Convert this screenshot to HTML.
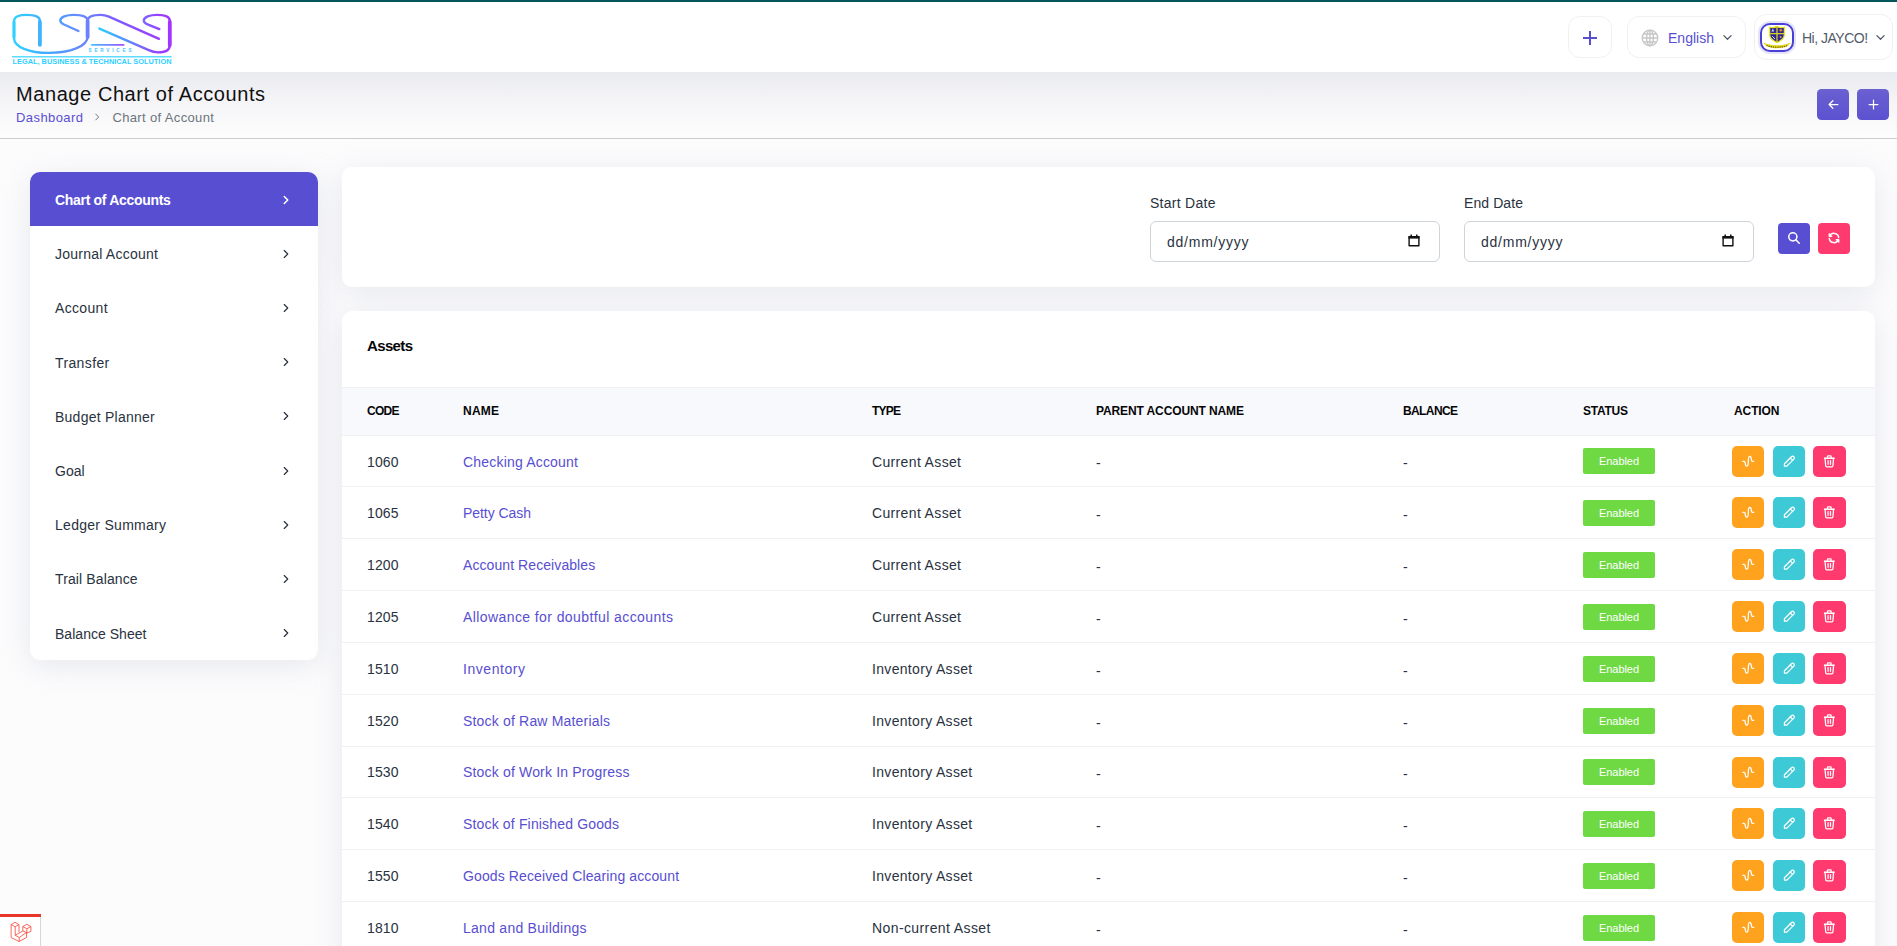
<!DOCTYPE html>
<html lang="en"><head><meta charset="utf-8"><title>Manage Chart of Accounts</title>
<style>
*{box-sizing:border-box}
html,body{margin:0;padding:0}
body{width:1897px;height:946px;overflow:hidden;position:relative;background:#fcfcfd;font-family:"Liberation Sans",sans-serif;font-size:14px;color:#293240;letter-spacing:0}
a{text-decoration:none;color:inherit}
.abs{position:absolute}
#topbar{left:0;top:0;width:1897px;height:72px;background:#fff;border-top:2px solid #03555c}
#bg{left:0;top:139px;width:1897px;height:807px;background:#fcfcfd}
#phead{left:0;top:72px;width:1897px;height:67px;background:linear-gradient(180deg,#e9eaef 0,#f4f4f7 40%,#fdfdfd 100%);border-bottom:1px solid #ccc}
#title{left:16px;top:81px;font-size:20px;line-height:26px;color:#111;white-space:nowrap}
#crumb{left:16px;top:109px;font-size:13px;line-height:18px;white-space:nowrap;color:#6c757d}
#crumb .d{color:#584ed2}
.hbtn{border:1px solid #f1f1f1;border-radius:12px;background:#fff}
.pbtn{background:linear-gradient(180deg,#6a60d1,#5c52d0);border-radius:4.500px;width:32px;height:31px;top:89px}
.pbtn svg{position:absolute;left:8.500px;top:8px;width:15px;height:15px;fill:none;stroke:#fff;stroke-width:2;stroke-linecap:round;stroke-linejoin:round}
#side{left:30px;top:172px;width:288px;height:488px;background:#fff;border-radius:10px;box-shadow:0 6px 30px rgba(182,186,203,.3);overflow:hidden}
.sitem{display:block;position:relative;height:54.2px;padding:19px 25px 0 25px;font-size:14px;line-height:18px;color:#293240;white-space:nowrap}
.sitem.active{background:#584ed2;color:#fff;font-weight:bold}
.chev{position:absolute;right:25px;top:20.600px;width:14px;height:14px;fill:none;stroke:#293240;stroke-width:2;stroke-linecap:round;stroke-linejoin:round}
.active .chev{stroke:#fff;stroke-width:2.600}
.card{background:#fff;border-radius:10px;box-shadow:0 6px 30px rgba(182,186,203,.3)}
#filter{left:342px;top:167px;width:1533px;height:120px}
.lbl{font-size:14px;line-height:18px;color:#293240;white-space:nowrap}
.dinp{width:290px;height:41px;top:221px;border:1px solid #ced4da;border-radius:6px;background:#fff}
.dinp>span{position:absolute;left:16px;top:11px;font-size:14px;line-height:18px;color:#293240}
.dinp svg{position:absolute;left:257px;top:12px;width:12px;height:13px}
.fbtn{width:32px;height:31px;top:223px;border-radius:4px}
.fbtn svg{position:absolute;left:9px;top:7.800px;width:14px;height:14px;fill:none;stroke:#fff;stroke-width:2.6;stroke-linecap:round;stroke-linejoin:round}
#tcard{left:342px;top:311px;width:1533px;height:700px;overflow:hidden;border-bottom-left-radius:0;border-bottom-right-radius:0}
#assets{left:25px;top:25px;font-size:15px;font-weight:bold;line-height:20px;color:#060606}
table{position:absolute;left:0;top:76px;width:1533px;border-collapse:separate;border-spacing:0;table-layout:fixed}
th{height:49px;background:#f8f9fd;border-top:1px solid #f1f1f1;border-bottom:1px solid #f1f1f1;font-size:12px;font-weight:bold;color:#060606;text-align:left;padding:0 0 1px 0;white-space:nowrap}
td{height:52px;border-bottom:1px solid #f1f1f1;padding:0;font-size:14px;color:#293240;white-space:nowrap;vertical-align:middle}
tr.h51 td{height:51px}
td.c2 a{color:#584ed2}
.c1{padding-left:25px;width:121px}
th.c1,td.c1{padding-left:25px}
.badge{display:inline-block;width:72px;height:26px;background:#6fd943;color:#fff;border-radius:2px;font-size:11px;line-height:26px;text-align:center;letter-spacing:0;vertical-align:middle}
.ab{display:inline-block;position:relative;width:32px;height:31px;border-radius:5px;vertical-align:middle;margin-right:9px}
.ab1{background:#ffa21d}.ab2{background:#3ec9d6;margin-right:8px}.ab3{background:#ff3a6e;width:33px;margin-right:0}
.ic{position:absolute;left:8.700px;top:8.200px;width:14.600px;height:14.600px;fill:none;stroke:#fff;stroke-width:2.100;stroke-linecap:round;stroke-linejoin:round}
#dbg{left:0;top:914px;width:41px;height:32px;background:#fff;border-top:3px solid #e8372a}
#dbg i{position:absolute;right:0;top:0;width:1px;height:30px;background:#d8d8d8}

.dsh{font-weight:normal;position:relative;top:2px}
tr.r1 td.c1>span,tr.r1 td.c2>a,tr.r1 td.c3>span{position:relative;top:1px}

</style></head><body>
<div id="bg" class="abs"></div>
<div id="phead" class="abs"></div>
<div id="topbar" class="abs">

</div>
<svg class="abs" style="left:0;top:0" width="190" height="72" viewBox="0 0 190 72">
<defs><linearGradient id="lg" gradientUnits="userSpaceOnUse" x1="12" y1="0" x2="172" y2="0"><stop offset="0" stop-color="#2fd3ff"/><stop offset=".22" stop-color="#45aaff"/><stop offset=".45" stop-color="#6a86ff"/><stop offset=".65" stop-color="#7d5cff"/><stop offset="1" stop-color="#a531ff"/></linearGradient><linearGradient id="lg2" gradientUnits="userSpaceOnUse" x1="99" y1="0" x2="172" y2="0"><stop offset="0" stop-color="#2fd0ff"/><stop offset=".3" stop-color="#4d9cff"/><stop offset=".6" stop-color="#7a66ff"/><stop offset=".85" stop-color="#9b3cff"/><stop offset="1" stop-color="#a531ff"/></linearGradient><linearGradient id="lg3" gradientUnits="userSpaceOnUse" x1="91" y1="0" x2="125" y2="0"><stop offset="0" stop-color="#3cc4ff"/><stop offset="1" stop-color="#a04cff"/></linearGradient></defs>
<g fill="none" stroke="url(#lg)" stroke-width="2.400" stroke-linecap="round" stroke-linejoin="round">
<path d="M39.900 45.100V21C39.900 16.500 33.500 14.900 26.500 14.900S14 16.500 14 21v17c0 9 15 14.900 35 14.900 21 0 38.600-6.400 38.600-16.400V21"/>
<path d="M87.600 21c0-4.500-6.600-6.100-13.800-6.100-7.500 0-13.500 2-13.500 5.600 0 2 1.700 3 3.700 4l14.400 6.500"/>
<path d="M87.600 21c0-4.500 6-6.100 13.100-6.100 3.300 0 5.300.6 8.200 1.800L159 38.800"/>
<path d="M39.900 22v22.800M87.600 21v16" stroke-width="3.800"/>
<path d="M14 22v15" stroke-width="3"/>
</g>
<g fill="none" stroke="url(#lg2)" stroke-width="2.400" stroke-linecap="round" stroke-linejoin="round">
<path d="M99.400 28.600l48.800 21.300c2.800 1.300 5.800 2.500 9.800 2.500 7 0 11.800-2.400 11.800-7.400V21c0-4.500-5.800-6.100-12.800-6.100s-13.200 2-13.200 5.600c0 2 1.700 3 3.700 3.800l11.800 4.800"/>
<path d="M169.800 22v23" stroke-width="3.800"/>
</g>
<rect x="91" y="44" width="33.500" height="1.800" rx=".9" fill="url(#lg3)"/>
<text x="88.500" y="51.800" font-family="Liberation Sans, sans-serif" font-weight="bold" font-size="4.600" fill="#43c6ff" textLength="43" lengthAdjust="spacing">SERVICES</text>
<rect x="12" y="56" width="159.700" height="1.500" fill="#5cdcff"/>
<text x="12.500" y="63.600" font-family="Liberation Sans, sans-serif" font-weight="bold" font-size="6.300" fill="#2fd0ff" textLength="159" lengthAdjust="spacingAndGlyphs">LEGAL, BUSINESS &amp; TECHNICAL SOLUTION</text>
</svg>
<div class="abs hbtn" style="left:1568px;top:16px;width:44px;height:42px"><svg style="position:absolute;left:14px;top:14px;width:14px;height:14px;fill:none;stroke:#584ed2;stroke-width:2;stroke-linecap:butt" viewBox="0 0 14 14"><path d="M7 0v14M0 7h14"/></svg></div>
<div class="abs hbtn" style="left:1627px;top:16px;width:119px;height:42px">
<svg style="position:absolute;left:13px;top:12px;width:18px;height:18px;fill:none;stroke:#c6c6c6;stroke-width:1.300" viewBox="0 0 18 18"><circle cx="9" cy="9" r="7.800"/><ellipse cx="9" cy="9" rx="3.400" ry="7.800"/><path d="M1.200 9h15.600M2.300 5h13.400M2.300 13h13.400M9 1.200v15.600"/></svg>
<span style="position:absolute;left:40px;top:12px;font-size:14px;line-height:18px;color:#584ed2"><span style="letter-spacing:0.01px">English</span></span>
<svg style="position:absolute;left:94px;top:17px;width:11px;height:7px;fill:none;stroke:#525b69;stroke-width:1.300;stroke-linecap:round;stroke-linejoin:round" viewBox="0 0 11 7"><path d="M1.900 1.600l3.600 3.600 3.600-3.600"/></svg>
</div>
<div class="abs hbtn" style="left:1754px;top:14px;width:139px;height:46px">
<div style="position:absolute;left:5px;top:8px;width:34px;height:28.500px;border:2px solid #4a40d4;border-radius:10px;background:#fff;box-shadow:0 0 0 2px rgba(88,78,210,.16);overflow:hidden">
<svg style="position:absolute;left:0;top:0;width:30px;height:25px" viewBox="0 0 30 25"><path d="M7.600 2c2.400.8 5 .8 7.400-.6 2.400 1.400 5 1.400 7.400.6v7.600c0 3.900-3.200 6.200-7.400 8-4.200-1.800-7.400-4.100-7.400-8z" fill="#2b2a8c" stroke="#ece51f" stroke-width="1.300"/><path d="M15 1.600v15.800M8 8.600h14" stroke="#d9cf2a" stroke-width="1.300"/><path d="M1.500 17.200c1.500 1 3 1.700 4.800 2.100 2.800.7 5.700 1 8.700 1s5.900-.3 8.700-1c1.800-.4 3.300-1.100 4.800-2.100-.6 3.600-6 6-13.500 6s-12.900-2.400-13.500-6z" fill="#e4d81c"/><path d="M4.500 20.400c3.200 1.300 6.800 1.800 10.500 1.800s7.300-.5 10.500-1.800" stroke="#6a5c10" stroke-width="1.100" fill="none" stroke-dasharray="1.300 .9"/><circle cx="18.800" cy="5.300" r="1.300" fill="#f08a2a"/><path d="M10.800 3.600l1.400 2.800H9.400z" fill="#d8d8e8"/><path d="M10.200 11.200l2.800 2.800" stroke="#eee" stroke-width=".9"/><circle cx="18.600" cy="12" r="1" fill="#e88"/></svg>
</div>
<span style="position:absolute;left:47px;top:14px;font-size:14px;line-height:18px;color:#525b69;white-space:nowrap"><span style="letter-spacing:-0.5px">Hi, JAYCO!</span></span>
<svg style="position:absolute;left:120px;top:19px;width:11px;height:7px;fill:none;stroke:#525b69;stroke-width:1.300;stroke-linecap:round;stroke-linejoin:round" viewBox="0 0 11 7"><path d="M1.900 1.600l3.600 3.600 3.600-3.600"/></svg>
</div>
<div id="title" class="abs"><span style="letter-spacing:0.58px">Manage Chart of Accounts</span></div>
<div id="crumb" class="abs"><span class="d"><span style="letter-spacing:0.42px">Dashboard</span></span><svg style="display:inline-block;width:10px;height:10px;margin:0 10px 0 9px;fill:none;stroke:#6c757d;stroke-width:2.4;stroke-linecap:round;stroke-linejoin:round" viewBox="0 0 24 24"><path d="M9 5l7 7-7 7"/></svg><span><span style="letter-spacing:0.36px">Chart of Account</span></span></div>
<div class="abs pbtn" style="left:1817px"><svg viewBox="0 0 24 24"><path d="M5 12h14M5 12l6 6M5 12l6-6"/></svg></div>
<div class="abs pbtn" style="left:1857px"><svg viewBox="0 0 24 24"><path d="M12 5v14M5 12h14"/></svg></div>
<div id="side" class="abs">
<a class="sitem active"><span style="letter-spacing:-0.31px">Chart of Accounts</span><svg class="chev" viewBox="0 0 24 24"><path d="M9 6l6 6-6 6"/></svg></a>
<a class="sitem"><span style="letter-spacing:0.23px">Journal Account</span><svg class="chev" viewBox="0 0 24 24"><path d="M9 6l6 6-6 6"/></svg></a>
<a class="sitem"><span style="letter-spacing:0.33px">Account</span><svg class="chev" viewBox="0 0 24 24"><path d="M9 6l6 6-6 6"/></svg></a>
<a class="sitem"><span style="letter-spacing:0.38px">Transfer</span><svg class="chev" viewBox="0 0 24 24"><path d="M9 6l6 6-6 6"/></svg></a>
<a class="sitem"><span style="letter-spacing:0.25px">Budget Planner</span><svg class="chev" viewBox="0 0 24 24"><path d="M9 6l6 6-6 6"/></svg></a>
<a class="sitem"><span style="letter-spacing:0.01px">Goal</span><svg class="chev" viewBox="0 0 24 24"><path d="M9 6l6 6-6 6"/></svg></a>
<a class="sitem"><span style="letter-spacing:0.28px">Ledger Summary</span><svg class="chev" viewBox="0 0 24 24"><path d="M9 6l6 6-6 6"/></svg></a>
<a class="sitem"><span style="letter-spacing:0.12px">Trail Balance</span><svg class="chev" viewBox="0 0 24 24"><path d="M9 6l6 6-6 6"/></svg></a>
<a class="sitem"><span style="letter-spacing:0.03px">Balance Sheet</span><svg class="chev" viewBox="0 0 24 24"><path d="M9 6l6 6-6 6"/></svg></a>

</div>
<div id="filter" class="abs card"></div>
<div class="abs lbl" style="left:1150px;top:194px"><span style="letter-spacing:0.27px">Start Date</span></div>
<div class="abs lbl" style="left:1464px;top:194px"><span style="letter-spacing:0.09px">End Date</span></div>
<div class="abs dinp" style="left:1150px"><span><span style="letter-spacing:0.76px">dd/mm/yyyy</span></span><svg viewBox="0 0 12 13"><path d="M1.100 2.800h9.800v8.900H1.100z" fill="none" stroke="#111" stroke-width="1.400" stroke-linejoin="round"/><path d="M.5 2h11v2.600H.5z" fill="#111"/><path d="M3.200 .4v2M8.800 .4v2" stroke="#111" stroke-width="1.500"/></svg></div>
<div class="abs dinp" style="left:1464px"><span><span style="letter-spacing:0.76px">dd/mm/yyyy</span></span><svg viewBox="0 0 12 13"><path d="M1.100 2.800h9.800v8.900H1.100z" fill="none" stroke="#111" stroke-width="1.400" stroke-linejoin="round"/><path d="M.5 2h11v2.600H.5z" fill="#111"/><path d="M3.200 .4v2M8.800 .4v2" stroke="#111" stroke-width="1.500"/></svg></div>
<div class="abs fbtn" style="left:1778px;background:#584ed2"><svg viewBox="0 0 24 24"><circle cx="10" cy="10" r="7"/><path d="M21 21l-6-6"/></svg></div>
<div class="abs fbtn" style="left:1818px;background:#ff3a6e"><svg viewBox="0 0 24 24"><path d="M20 11A8.100 8.100 0 0 0 4.500 9M4 5v4h4"/><path d="M4 13a8.100 8.100 0 0 0 15.500 2M20 19v-4h-4"/></svg></div>
<div id="tcard" class="abs card">
<div id="assets" class="abs"><span style="letter-spacing:-0.64px">Assets</span></div>
<table>
<colgroup><col style="width:121px"><col style="width:409px"><col style="width:224px"><col style="width:307px"><col style="width:180px"><col style="width:149px"><col style="width:143px"></colgroup>
<thead><tr><th class="c1"><span style="letter-spacing:-0.72px">CODE</span></th><th><span style="letter-spacing:0.22px">NAME</span></th><th><span style="letter-spacing:-0.78px">TYPE</span></th><th><span style="letter-spacing:-0.11px">PARENT ACCOUNT NAME</span></th><th><span style="letter-spacing:-0.61px">BALANCE</span></th><th><span style="letter-spacing:-0.24px">STATUS</span></th><th style="padding-left:2px"><span style="letter-spacing:-0.1px">ACTION</span></th></tr></thead>
<tbody>
<tr class="h51 r1"><td class="c1"><span style="letter-spacing:.1px">1060</span></td><td class="c2"><a><span style="letter-spacing:0.19px">Checking Account</span></a></td><td class="c3"><span style="letter-spacing:0.35px">Current Asset</span></td><td class="c4"><b class="dsh">-</b></td><td class="c5"><b class="dsh">-</b></td><td class="c6"><span class="badge"><span style="letter-spacing:-0.06px">Enabled</span></span></td><td class="c7"><span class="ab ab1"><svg class="ic" viewBox="0 0 24 24"><path d="M21 12h-2c-.894 0-1.662-.857-1.761-2c-.296-3.450-.749-6-2.749-6s-2.500 3.582-2.500 8s-.500 8-2.500 8s-2.452-2.547-2.749-6c-.100-1.147-.867-2-1.763-2h-2"/></svg></span><span class="ab ab2"><svg class="ic" viewBox="0 0 24 24"><path d="M4 20h4L19.500 8.500a2.828 2.828 0 1 0-4-4L4 16v4z"/><path d="M13.500 6.500l4 4"/></svg></span><span class="ab ab3"><svg class="ic" viewBox="0 0 24 24"><path d="M4 7h16"/><path d="M10 11v6"/><path d="M14 11v6"/><path d="M5 7l1 12a2 2 0 0 0 2 2h8a2 2 0 0 0 2-2l1-12"/><path d="M9 7V4a1 1 0 0 1 1-1h4a1 1 0 0 1 1 1v3"/></svg></span></td></tr>
<tr><td class="c1"><span style="letter-spacing:.1px">1065</span></td><td class="c2"><a><span style="letter-spacing:-0.05px">Petty Cash</span></a></td><td class="c3"><span style="letter-spacing:0.35px">Current Asset</span></td><td class="c4"><b class="dsh">-</b></td><td class="c5"><b class="dsh">-</b></td><td class="c6"><span class="badge"><span style="letter-spacing:-0.06px">Enabled</span></span></td><td class="c7"><span class="ab ab1"><svg class="ic" viewBox="0 0 24 24"><path d="M21 12h-2c-.894 0-1.662-.857-1.761-2c-.296-3.450-.749-6-2.749-6s-2.500 3.582-2.500 8s-.500 8-2.500 8s-2.452-2.547-2.749-6c-.100-1.147-.867-2-1.763-2h-2"/></svg></span><span class="ab ab2"><svg class="ic" viewBox="0 0 24 24"><path d="M4 20h4L19.500 8.500a2.828 2.828 0 1 0-4-4L4 16v4z"/><path d="M13.500 6.500l4 4"/></svg></span><span class="ab ab3"><svg class="ic" viewBox="0 0 24 24"><path d="M4 7h16"/><path d="M10 11v6"/><path d="M14 11v6"/><path d="M5 7l1 12a2 2 0 0 0 2 2h8a2 2 0 0 0 2-2l1-12"/><path d="M9 7V4a1 1 0 0 1 1-1h4a1 1 0 0 1 1 1v3"/></svg></span></td></tr>
<tr><td class="c1"><span style="letter-spacing:.1px">1200</span></td><td class="c2"><a><span style="letter-spacing:0.08px">Account Receivables</span></a></td><td class="c3"><span style="letter-spacing:0.35px">Current Asset</span></td><td class="c4"><b class="dsh">-</b></td><td class="c5"><b class="dsh">-</b></td><td class="c6"><span class="badge"><span style="letter-spacing:-0.06px">Enabled</span></span></td><td class="c7"><span class="ab ab1"><svg class="ic" viewBox="0 0 24 24"><path d="M21 12h-2c-.894 0-1.662-.857-1.761-2c-.296-3.450-.749-6-2.749-6s-2.500 3.582-2.500 8s-.500 8-2.500 8s-2.452-2.547-2.749-6c-.100-1.147-.867-2-1.763-2h-2"/></svg></span><span class="ab ab2"><svg class="ic" viewBox="0 0 24 24"><path d="M4 20h4L19.500 8.500a2.828 2.828 0 1 0-4-4L4 16v4z"/><path d="M13.500 6.500l4 4"/></svg></span><span class="ab ab3"><svg class="ic" viewBox="0 0 24 24"><path d="M4 7h16"/><path d="M10 11v6"/><path d="M14 11v6"/><path d="M5 7l1 12a2 2 0 0 0 2 2h8a2 2 0 0 0 2-2l1-12"/><path d="M9 7V4a1 1 0 0 1 1-1h4a1 1 0 0 1 1 1v3"/></svg></span></td></tr>
<tr><td class="c1"><span style="letter-spacing:.1px">1205</span></td><td class="c2"><a><span style="letter-spacing:0.41px">Allowance for doubtful accounts</span></a></td><td class="c3"><span style="letter-spacing:0.35px">Current Asset</span></td><td class="c4"><b class="dsh">-</b></td><td class="c5"><b class="dsh">-</b></td><td class="c6"><span class="badge"><span style="letter-spacing:-0.06px">Enabled</span></span></td><td class="c7"><span class="ab ab1"><svg class="ic" viewBox="0 0 24 24"><path d="M21 12h-2c-.894 0-1.662-.857-1.761-2c-.296-3.450-.749-6-2.749-6s-2.500 3.582-2.500 8s-.500 8-2.500 8s-2.452-2.547-2.749-6c-.100-1.147-.867-2-1.763-2h-2"/></svg></span><span class="ab ab2"><svg class="ic" viewBox="0 0 24 24"><path d="M4 20h4L19.500 8.500a2.828 2.828 0 1 0-4-4L4 16v4z"/><path d="M13.500 6.500l4 4"/></svg></span><span class="ab ab3"><svg class="ic" viewBox="0 0 24 24"><path d="M4 7h16"/><path d="M10 11v6"/><path d="M14 11v6"/><path d="M5 7l1 12a2 2 0 0 0 2 2h8a2 2 0 0 0 2-2l1-12"/><path d="M9 7V4a1 1 0 0 1 1-1h4a1 1 0 0 1 1 1v3"/></svg></span></td></tr>
<tr><td class="c1"><span style="letter-spacing:.1px">1510</span></td><td class="c2"><a><span style="letter-spacing:0.55px">Inventory</span></a></td><td class="c3"><span style="letter-spacing:0.32px">Inventory Asset</span></td><td class="c4"><b class="dsh">-</b></td><td class="c5"><b class="dsh">-</b></td><td class="c6"><span class="badge"><span style="letter-spacing:-0.06px">Enabled</span></span></td><td class="c7"><span class="ab ab1"><svg class="ic" viewBox="0 0 24 24"><path d="M21 12h-2c-.894 0-1.662-.857-1.761-2c-.296-3.450-.749-6-2.749-6s-2.500 3.582-2.500 8s-.500 8-2.500 8s-2.452-2.547-2.749-6c-.100-1.147-.867-2-1.763-2h-2"/></svg></span><span class="ab ab2"><svg class="ic" viewBox="0 0 24 24"><path d="M4 20h4L19.500 8.500a2.828 2.828 0 1 0-4-4L4 16v4z"/><path d="M13.500 6.500l4 4"/></svg></span><span class="ab ab3"><svg class="ic" viewBox="0 0 24 24"><path d="M4 7h16"/><path d="M10 11v6"/><path d="M14 11v6"/><path d="M5 7l1 12a2 2 0 0 0 2 2h8a2 2 0 0 0 2-2l1-12"/><path d="M9 7V4a1 1 0 0 1 1-1h4a1 1 0 0 1 1 1v3"/></svg></span></td></tr>
<tr><td class="c1"><span style="letter-spacing:.1px">1520</span></td><td class="c2"><a><span style="letter-spacing:0.18px">Stock of Raw Materials</span></a></td><td class="c3"><span style="letter-spacing:0.32px">Inventory Asset</span></td><td class="c4"><b class="dsh">-</b></td><td class="c5"><b class="dsh">-</b></td><td class="c6"><span class="badge"><span style="letter-spacing:-0.06px">Enabled</span></span></td><td class="c7"><span class="ab ab1"><svg class="ic" viewBox="0 0 24 24"><path d="M21 12h-2c-.894 0-1.662-.857-1.761-2c-.296-3.450-.749-6-2.749-6s-2.500 3.582-2.500 8s-.500 8-2.500 8s-2.452-2.547-2.749-6c-.100-1.147-.867-2-1.763-2h-2"/></svg></span><span class="ab ab2"><svg class="ic" viewBox="0 0 24 24"><path d="M4 20h4L19.500 8.500a2.828 2.828 0 1 0-4-4L4 16v4z"/><path d="M13.500 6.500l4 4"/></svg></span><span class="ab ab3"><svg class="ic" viewBox="0 0 24 24"><path d="M4 7h16"/><path d="M10 11v6"/><path d="M14 11v6"/><path d="M5 7l1 12a2 2 0 0 0 2 2h8a2 2 0 0 0 2-2l1-12"/><path d="M9 7V4a1 1 0 0 1 1-1h4a1 1 0 0 1 1 1v3"/></svg></span></td></tr>
<tr class="h51"><td class="c1"><span style="letter-spacing:.1px">1530</span></td><td class="c2"><a><span style="letter-spacing:0.17px">Stock of Work In Progress</span></a></td><td class="c3"><span style="letter-spacing:0.32px">Inventory Asset</span></td><td class="c4"><b class="dsh">-</b></td><td class="c5"><b class="dsh">-</b></td><td class="c6"><span class="badge"><span style="letter-spacing:-0.06px">Enabled</span></span></td><td class="c7"><span class="ab ab1"><svg class="ic" viewBox="0 0 24 24"><path d="M21 12h-2c-.894 0-1.662-.857-1.761-2c-.296-3.450-.749-6-2.749-6s-2.500 3.582-2.500 8s-.500 8-2.500 8s-2.452-2.547-2.749-6c-.100-1.147-.867-2-1.763-2h-2"/></svg></span><span class="ab ab2"><svg class="ic" viewBox="0 0 24 24"><path d="M4 20h4L19.500 8.500a2.828 2.828 0 1 0-4-4L4 16v4z"/><path d="M13.500 6.500l4 4"/></svg></span><span class="ab ab3"><svg class="ic" viewBox="0 0 24 24"><path d="M4 7h16"/><path d="M10 11v6"/><path d="M14 11v6"/><path d="M5 7l1 12a2 2 0 0 0 2 2h8a2 2 0 0 0 2-2l1-12"/><path d="M9 7V4a1 1 0 0 1 1-1h4a1 1 0 0 1 1 1v3"/></svg></span></td></tr>
<tr><td class="c1"><span style="letter-spacing:.1px">1540</span></td><td class="c2"><a><span style="letter-spacing:0.16px">Stock of Finished Goods</span></a></td><td class="c3"><span style="letter-spacing:0.32px">Inventory Asset</span></td><td class="c4"><b class="dsh">-</b></td><td class="c5"><b class="dsh">-</b></td><td class="c6"><span class="badge"><span style="letter-spacing:-0.06px">Enabled</span></span></td><td class="c7"><span class="ab ab1"><svg class="ic" viewBox="0 0 24 24"><path d="M21 12h-2c-.894 0-1.662-.857-1.761-2c-.296-3.450-.749-6-2.749-6s-2.500 3.582-2.500 8s-.500 8-2.500 8s-2.452-2.547-2.749-6c-.100-1.147-.867-2-1.763-2h-2"/></svg></span><span class="ab ab2"><svg class="ic" viewBox="0 0 24 24"><path d="M4 20h4L19.500 8.500a2.828 2.828 0 1 0-4-4L4 16v4z"/><path d="M13.500 6.500l4 4"/></svg></span><span class="ab ab3"><svg class="ic" viewBox="0 0 24 24"><path d="M4 7h16"/><path d="M10 11v6"/><path d="M14 11v6"/><path d="M5 7l1 12a2 2 0 0 0 2 2h8a2 2 0 0 0 2-2l1-12"/><path d="M9 7V4a1 1 0 0 1 1-1h4a1 1 0 0 1 1 1v3"/></svg></span></td></tr>
<tr><td class="c1"><span style="letter-spacing:.1px">1550</span></td><td class="c2"><a><span style="letter-spacing:0.12px">Goods Received Clearing account</span></a></td><td class="c3"><span style="letter-spacing:0.32px">Inventory Asset</span></td><td class="c4"><b class="dsh">-</b></td><td class="c5"><b class="dsh">-</b></td><td class="c6"><span class="badge"><span style="letter-spacing:-0.06px">Enabled</span></span></td><td class="c7"><span class="ab ab1"><svg class="ic" viewBox="0 0 24 24"><path d="M21 12h-2c-.894 0-1.662-.857-1.761-2c-.296-3.450-.749-6-2.749-6s-2.500 3.582-2.500 8s-.500 8-2.500 8s-2.452-2.547-2.749-6c-.100-1.147-.867-2-1.763-2h-2"/></svg></span><span class="ab ab2"><svg class="ic" viewBox="0 0 24 24"><path d="M4 20h4L19.500 8.500a2.828 2.828 0 1 0-4-4L4 16v4z"/><path d="M13.500 6.500l4 4"/></svg></span><span class="ab ab3"><svg class="ic" viewBox="0 0 24 24"><path d="M4 7h16"/><path d="M10 11v6"/><path d="M14 11v6"/><path d="M5 7l1 12a2 2 0 0 0 2 2h8a2 2 0 0 0 2-2l1-12"/><path d="M9 7V4a1 1 0 0 1 1-1h4a1 1 0 0 1 1 1v3"/></svg></span></td></tr>
<tr><td class="c1"><span style="letter-spacing:.1px">1810</span></td><td class="c2"><a><span style="letter-spacing:0.26px">Land and Buildings</span></a></td><td class="c3"><span style="letter-spacing:0.4px">Non-current Asset</span></td><td class="c4"><b class="dsh">-</b></td><td class="c5"><b class="dsh">-</b></td><td class="c6"><span class="badge"><span style="letter-spacing:-0.06px">Enabled</span></span></td><td class="c7"><span class="ab ab1"><svg class="ic" viewBox="0 0 24 24"><path d="M21 12h-2c-.894 0-1.662-.857-1.761-2c-.296-3.450-.749-6-2.749-6s-2.500 3.582-2.500 8s-.500 8-2.500 8s-2.452-2.547-2.749-6c-.100-1.147-.867-2-1.763-2h-2"/></svg></span><span class="ab ab2"><svg class="ic" viewBox="0 0 24 24"><path d="M4 20h4L19.500 8.500a2.828 2.828 0 1 0-4-4L4 16v4z"/><path d="M13.500 6.500l4 4"/></svg></span><span class="ab ab3"><svg class="ic" viewBox="0 0 24 24"><path d="M4 7h16"/><path d="M10 11v6"/><path d="M14 11v6"/><path d="M5 7l1 12a2 2 0 0 0 2 2h8a2 2 0 0 0 2-2l1-12"/><path d="M9 7V4a1 1 0 0 1 1-1h4a1 1 0 0 1 1 1v3"/></svg></span></td></tr>

</tbody></table>
</div>
<div id="dbg" class="abs"><i></i><svg style="position:absolute;left:0;top:0;width:41px;height:30px;fill:none;stroke:#f4382c;stroke-width:.75;stroke-linejoin:round" viewBox="0 917 41 30"><path d="M11.100 924.600l3.900-2.300 4 2.300-3.800 2.100zM11.100 924.600v12.900l7.900 4 7.600-4v-5.100M15.200 926.700v8.500l4 2.300v4M19 924.600v7.600M15.200 935.200l7.600-4.200 3.800 1.500-7.400 5M22.800 926.500l4.050-2.200 4.050 2.200-4.050 2.300zM22.800 926.500v4.500M30.900 926.500v4.900l-4.050 1.700v-4.300"/></svg></div>
</body></html>
